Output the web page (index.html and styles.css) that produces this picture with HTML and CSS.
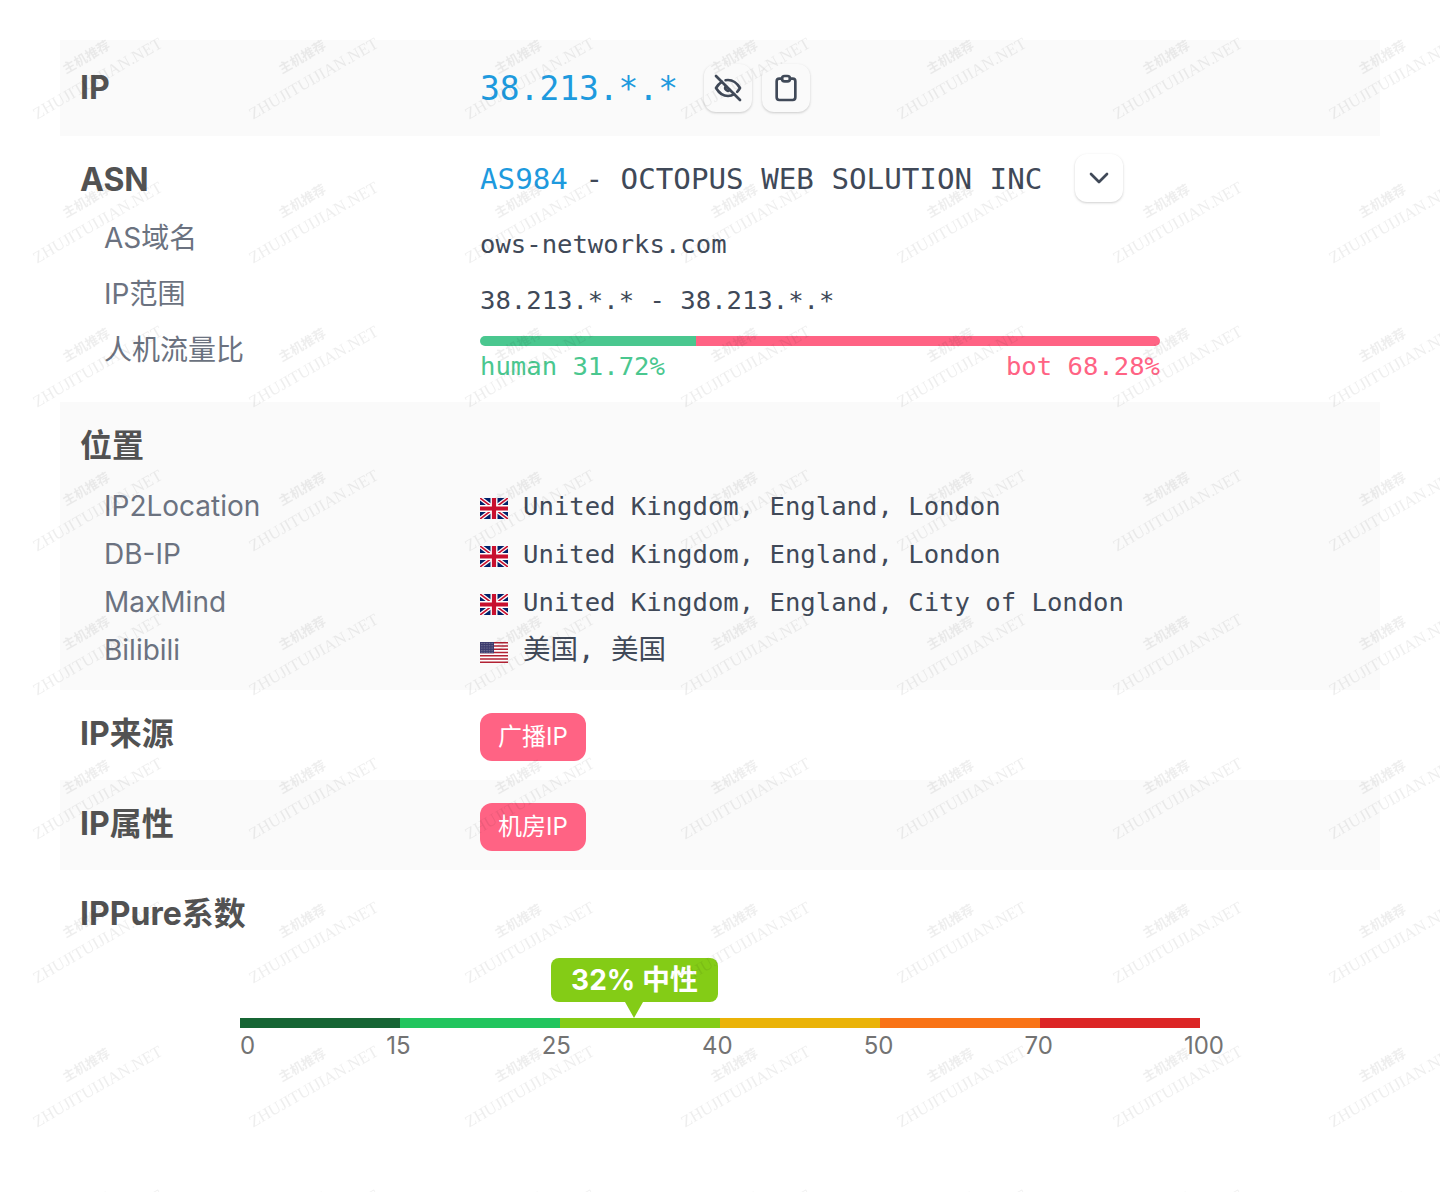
FILE: index.html
```html
<!DOCTYPE html>
<html lang="zh-CN">
<head>
<meta charset="utf-8">
<title>IP</title>
<link rel="stylesheet" href="styles.css">
</head>
<body>
<main class="page">
  <section class="row shaded row-ip">
    <h2 class="title">IP</h2>
    <div class="value inline">
      <span class="ip-text">38.213.*.*</span>
      <button class="icon-btn first" type="button" aria-label="hide">
        <svg class="icon" viewBox="0 0 24 24"><path d="M10.585 10.587a2 2 0 0 0 2.829 2.828"/><path d="M16.681 16.673a8.717 8.717 0 0 1 -4.681 1.327c-3.6 0 -6.6 -2 -9 -6c1.272 -2.12 2.712 -3.678 4.32 -4.674m2.86 -1.146a9.055 9.055 0 0 1 1.82 -.18c3.6 0 6.6 2 9 6c-.666 1.11 -1.379 2.067 -2.138 2.87"/><path d="M3 3l18 18"/></svg>
      </button>
      <button class="icon-btn" type="button" aria-label="copy">
        <svg class="icon" viewBox="0 0 24 24"><path d="M9 5h-2a2 2 0 0 0 -2 2v12a2 2 0 0 0 2 2h10a2 2 0 0 0 2 -2v-12a2 2 0 0 0 -2 -2h-2"/><path d="M9 3m0 2a2 2 0 0 1 2 -2h2a2 2 0 0 1 2 2v0a2 2 0 0 1 -2 2h-2a2 2 0 0 1 -2 -2z"/></svg>
      </button>
    </div>
  </section>

  <section class="row-block asn">
    <div class="row asn-head">
      <h2 class="title">ASN</h2>
      <div class="value inline">
        <span class="asn-text"><span class="link">AS984</span> - OCTOPUS WEB SOLUTION INC</span>
        <button class="icon-btn chevron" type="button" aria-label="expand">
          <svg class="icon" viewBox="0 0 24 24"><path d="M6 9l6 6l6 -6"/></svg>
        </button>
      </div>
    </div>
    <div class="row sub sub-asn"><span class="label">AS域名</span><span class="value mono">ows-networks.com</span></div>
    <div class="row sub sub-asn"><span class="label">IP范围</span><span class="value mono">38.213.*.* - 38.213.*.*</span></div>
    <div class="row sub sub-ratio">
      <span class="label">人机流量比</span>
      <div class="value ratio">
        <div class="ratio-bar"><span class="human-fill"></span><span class="bot-fill"></span></div>
        <div class="ratio-labels"><span class="human">human 31.72%</span><span class="bot">bot 68.28%</span></div>
      </div>
    </div>
  </section>

  <section class="row-block shaded loc">
    <h2 class="title loc-title">位置</h2>
    <div class="row sub sub-loc"><span class="label">IP2Location</span>
      <span class="value mono loc-val"><svg class="flag" viewBox="0 0 60 45"><use href="#uk"/></svg>United Kingdom, England, London</span></div>
    <div class="row sub sub-loc"><span class="label">DB-IP</span>
      <span class="value mono loc-val"><svg class="flag" viewBox="0 0 60 45"><use href="#uk"/></svg>United Kingdom, England, London</span></div>
    <div class="row sub sub-loc"><span class="label">MaxMind</span>
      <span class="value mono loc-val"><svg class="flag" viewBox="0 0 60 45"><use href="#uk"/></svg>United Kingdom, England, City of London</span></div>
    <div class="row sub sub-loc"><span class="label">Bilibili</span>
      <span class="value mono loc-val"><svg class="flag" viewBox="0 0 60 45"><use href="#us"/></svg><span class="cjk-val">美国, 美国</span></span></div>
  </section>

  <section class="row tag-row">
    <h2 class="title">IP来源</h2>
    <div class="value"><span class="tag">广播IP</span></div>
  </section>
  <section class="row tag-row shaded">
    <h2 class="title">IP属性</h2>
    <div class="value"><span class="tag">机房IP</span></div>
  </section>

  <section class="pure">
    <h2 class="title">IPPure系数</h2>
    <div class="gauge">
      <div class="pointer"><span class="pointer-text">32% 中性</span></div>
      <div class="scale">
        <span class="seg s1"></span><span class="seg s2"></span><span class="seg s3"></span>
        <span class="seg s4"></span><span class="seg s5"></span><span class="seg s6"></span>
      </div>
      <div class="ticks"><span>0</span><span>15</span><span>25</span><span>40</span><span>50</span><span>70</span><span>100</span></div>
    </div>
  </section>
</main>

<svg class="defs" width="0" height="0" aria-hidden="true">
  <defs>
    <symbol id="uk" viewBox="0 0 60 45">
      <rect width="60" height="45" fill="#012169"/>
      <path d="M0 0L60 45M60 0L0 45" stroke="#fff" stroke-width="9"/>
      <path d="M0 0L60 45M60 0L0 45" stroke="#c8102e" stroke-width="3.5"/>
      <path d="M30 0V45M0 22.5H60" stroke="#fff" stroke-width="15"/>
      <path d="M30 0V45M0 22.5H60" stroke="#c8102e" stroke-width="9"/>
    </symbol>
    <symbol id="us" viewBox="0 0 60 45">
      <rect width="60" height="45" fill="#fff"/>
      <path d="M0 1.7H60M0 8.6H60M0 15.6H60M0 22.5H60M0 29.4H60M0 36.4H60M0 43.3H60" stroke="#b22234" stroke-width="3.46"/>
      <rect width="30" height="24.2" fill="#3c3b6e"/>
      <path d="M2 3H28M2 8H28M2 13H28M2 18H28M2 22H28" stroke="#aab" stroke-width="1.4" stroke-dasharray="1.6 1.9"/>
    </symbol>
  </defs>
</svg>

<svg class="watermark" width="1440" height="1192" aria-hidden="true">
  <defs>
    <pattern id="wm" x="0" y="0" width="216" height="144" patternUnits="userSpaceOnUse">
      <g transform="translate(66 74) rotate(-30)">
        <text class="wm-cn" x="0" y="0">主机推荐</text>
        <text class="wm-en" x="-48" y="25">ZHUJITUIJIAN.NET</text>
      </g>
    </pattern>
  </defs>
  <rect width="1440" height="1192" fill="url(#wm)"/>
</svg>
</body>
</html>
```

FILE: styles.css
```css
* { box-sizing: border-box; }
html, body { margin: 0; padding: 0; background: #fff; }
body {
  width: 1440px;
  height: 1192px;
  overflow: hidden;
  position: relative;
  font-family: Inter, "Noto Sans CJK SC", sans-serif;
}
.page { padding: 40px 60px 0; }
.shaded { background: #fafafa; }

.row {
  display: grid;
  grid-template-columns: 400px 1fr;
  padding: 0 20px;
  align-items: center;
}
.row-ip { height: 96px; }
.title {
  margin: 0;
  font-size: 32px;
  line-height: 44px;
  font-weight: 700;
  color: #525252;
}
.value { min-width: 0; }
.inline { display: flex; align-items: center; }
.mono, .ip-text, .asn-text, .ratio-labels {
  font-family: "DejaVu Sans Mono", "Noto Sans CJK SC", monospace;
  color: #404958;
  white-space: pre;
}
.ip-text { font-size: 32.9px; line-height: 48px; color: #1e9ade; margin-top: 2px; }
.asn-text { font-size: 29.2px; line-height: 40px; margin-top: 2px; }
.link { color: #1e9ade; }
.mono { font-size: 25.6px; line-height: 32px; }

.icon-btn {
  width: 48px;
  height: 48px;
  margin: 0 0 0 10px;
  padding: 0;
  border: 0;
  border-radius: 12px;
  background: #fafafa;
  box-shadow: 0 1px 3px rgba(0, 0, 0, .14), 0 1px 2px rgba(0, 0, 0, .06);
  display: flex;
  align-items: center;
  justify-content: center;
}
.icon-btn.first { margin-left: 26px; }
.icon-btn.chevron { margin-left: 33px; background: #fff; }
.icon {
  width: 32px;
  height: 32px;
  fill: none;
  stroke: #404958;
  stroke-width: 2;
  stroke-linecap: round;
  stroke-linejoin: round;
}

.asn { height: 266px; }
.asn-head { height: 74px; padding-top: 10px; }
.asn-head .title { margin-top: 4px; }
.label {
  font-size: 28px;
  line-height: 40px;
  color: #6b7280;
  padding-left: 24px;
}
.sub-asn { height: 56px; }
.sub-asn .value { padding-top: 12px; }
.sub-ratio { align-items: start; height: 80px; }
.sub-ratio .label { padding-top: 8px; }
.ratio { width: 680px; padding-top: 14px; }
.ratio-bar { display: flex; height: 10px; border-radius: 5px; overflow: hidden; }
.human-fill { width: 31.72%; background: #4ac78f; }
.bot-fill { width: 68.28%; background: #ff6384; }
.ratio-labels {
  display: flex;
  justify-content: space-between;
  font-size: 25.6px;
  line-height: 30px;
  margin-top: 5px;
}
.human { color: #4ac78f; }
.bot { color: #ff6384; }

.loc { height: 288px; }
.loc-title { padding: 22px 20px 0; height: 80px; }
.sub-loc { height: 48px; }
.loc-val { display: flex; align-items: center; }
.flag { width: 28px; height: 21px; margin: 4px 15px 0 0; flex: none; }
.cjk-val { font-size: 27.5px; margin: -2px 0 0; }

.tag-row { height: 90px; align-items: center; }
.tag-row .title { margin-top: -2px; }
.tag {
  display: inline-block;
  margin-top: 4px;
  height: 48px;
  padding: 0 18px;
  border-radius: 12px;
  background: #ff6384;
  color: #fff;
  font-size: 24px;
  line-height: 48px;
  vertical-align: top;
}

.pure { padding: 22px 20px 0; height: 280px; }
.gauge {
  position: relative;
  width: 960px;
  margin: 22px 0 0 160px;
  padding-top: 60px;
}
.pointer {
  position: absolute;
  left: 311px;
  top: 0;
  width: 167px;
  height: 44px;
  border-radius: 8px;
  background: #84cc16;
  text-align: center;
}
.pointer::after {
  content: "";
  position: absolute;
  left: 74px;
  top: 44px;
  border-left: 9px solid transparent;
  border-right: 9px solid transparent;
  border-top: 16px solid #84cc16;
}
.pointer-text { font-size: 28px; line-height: 44px; font-weight: 700; color: #fff; }
.scale { display: flex; height: 10px; }
.seg { flex: 1; }
.s1 { background: #166534; }
.s2 { background: #22c55e; }
.s3 { background: #84cc16; }
.s4 { background: #eab308; }
.s5 { background: #f97316; }
.s6 { background: #dc2626; }
.ticks {
  display: flex;
  justify-content: space-between;
  margin-right: -24px;
  margin-top: 2px;
  font-size: 24px;
  line-height: 32px;
  color: #737373;
}

.defs { position: absolute; }
.watermark { position: absolute; left: 0; top: 0; pointer-events: none; }
.wm-cn, .wm-en { fill: rgba(0, 0, 0, .065); font-family: "Liberation Serif", "Noto Sans CJK SC", serif; }
.wm-cn { font-size: 13px; font-weight: 700; }
.wm-en { font-size: 16.6px; }
```
